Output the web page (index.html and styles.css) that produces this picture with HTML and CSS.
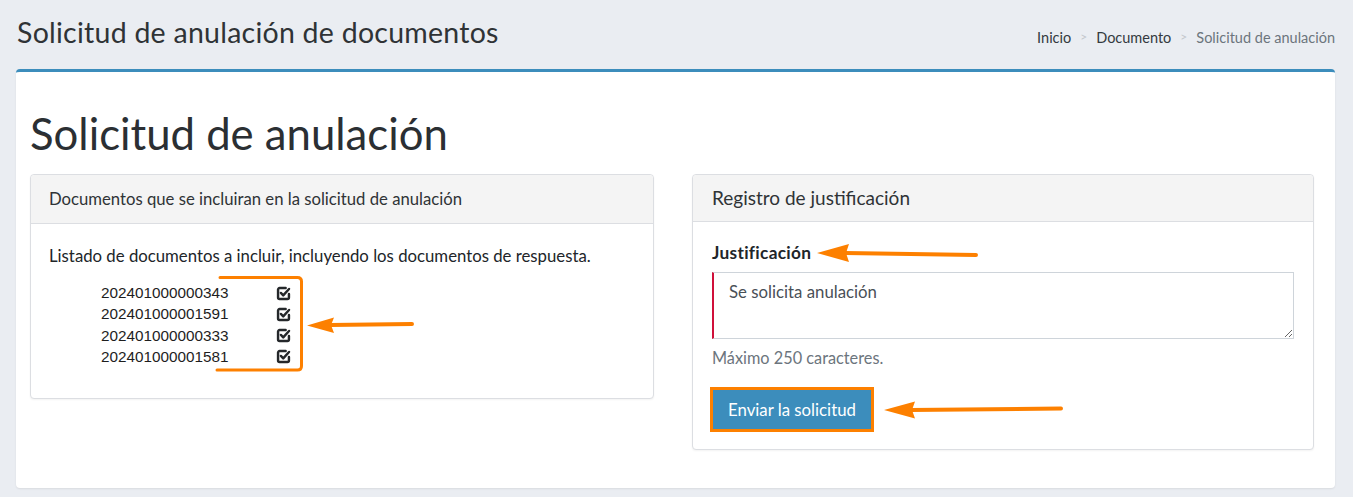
FILE: index.html
```html
<!DOCTYPE html>
<html lang="es">
<head>
<meta charset="utf-8">
<title>Solicitud de anulación de documentos</title>
<link rel="stylesheet" href="styles.css">
</head>
<body>
<div class="page">
  <header class="content-header">
    <h1 class="page-title">Solicitud de anulación de documentos</h1>
    <ol class="breadcrumb">
      <li class="crumb">Inicio</li>
      <li class="sep">&gt;</li>
      <li class="crumb">Documento</li>
      <li class="sep">&gt;</li>
      <li class="crumb active">Solicitud de anulación</li>
    </ol>
  </header>

  <section class="box">
    <h2 class="main-title">Solicitud de anulación</h2>
    <div class="row">
      <div class="card card-docs">
        <div class="card-header">Documentos que se incluiran en la solicitud de anulación</div>
        <div class="card-body">
          <p class="lead-text">Listado de documentos a incluir, incluyendo los documentos de respuesta.</p>
          <ul class="doc-list">
            <li class="doc-row"><span class="doc-num">202401000000343</span><svg class="chk" viewBox="0 0 16 16"><path d="M10.3 2.2H3.8A1.6 1.6 0 0 0 2.2 3.8v8.4a1.6 1.6 0 0 0 1.6 1.6h8.4a1.6 1.6 0 0 0 1.6-1.6V8.4"/><path d="M5.2 7.4l2.5 2.6 6.2-6.8"/></svg></li>
            <li class="doc-row"><span class="doc-num">202401000001591</span><svg class="chk" viewBox="0 0 16 16"><path d="M10.3 2.2H3.8A1.6 1.6 0 0 0 2.2 3.8v8.4a1.6 1.6 0 0 0 1.6 1.6h8.4a1.6 1.6 0 0 0 1.6-1.6V8.4"/><path d="M5.2 7.4l2.5 2.6 6.2-6.8"/></svg></li>
            <li class="doc-row"><span class="doc-num">202401000000333</span><svg class="chk" viewBox="0 0 16 16"><path d="M10.3 2.2H3.8A1.6 1.6 0 0 0 2.2 3.8v8.4a1.6 1.6 0 0 0 1.6 1.6h8.4a1.6 1.6 0 0 0 1.6-1.6V8.4"/><path d="M5.2 7.4l2.5 2.6 6.2-6.8"/></svg></li>
            <li class="doc-row"><span class="doc-num">202401000001581</span><svg class="chk" viewBox="0 0 16 16"><path d="M10.3 2.2H3.8A1.6 1.6 0 0 0 2.2 3.8v8.4a1.6 1.6 0 0 0 1.6 1.6h8.4a1.6 1.6 0 0 0 1.6-1.6V8.4"/><path d="M5.2 7.4l2.5 2.6 6.2-6.8"/></svg></li>
          </ul>
        </div>
      </div>

      <div class="card card-just">
        <div class="card-header card-header-lg">Registro de justificación</div>
        <div class="card-body card-body-form">
          <label class="field-label" for="just">Justificación</label>
          <textarea id="just" class="field-text">Se solicita anulación</textarea>
          <div class="field-help">Máximo 250 caracteres.</div>
          <button class="btn-send" type="button">Enviar la solicitud</button>
        </div>
      </div>
    </div>
  </section>
</div>

<svg class="annot" width="1353" height="497" viewBox="0 0 1353 497">
  <g fill="none" stroke="#fd8000" stroke-linecap="round" stroke-linejoin="round">
    <path stroke-width="3" d="M220 277.5H297.5Q301.5 277.5 301.5 281.5V366Q301.5 370 297.5 370H217"/>
    <path stroke-width="4" d="M330 325L412 324"/>
    <path stroke-width="4" d="M845 253L976 255"/>
    <path stroke-width="4" d="M910 410L1061 408.5"/>
  </g>
  <g fill="#fd8000">
    <path d="M307 325.5L334 317.5L331 325L334 333Z"/>
    <path d="M817 253L849 244L846 253L849 262Z"/>
    <path d="M884 410L915 401.5L912 410L915 418.5Z"/>
  </g>
</svg>
</body>
</html>
```

FILE: styles.css
```css
* { box-sizing: border-box; }

body {
  margin: 0;
  background: #eaedf2;
  font-family: Lato, "Liberation Sans", sans-serif;
  color: #212529;
  position: relative;
}

.page {
  padding: 0 18px 9px 16px;
}

.content-header {
  display: flex;
  justify-content: space-between;
  align-items: baseline;
  height: 69px;
  padding: 16px 0 0 1px;
}

.page-title {
  margin: 0;
  font-size: 28.5px;
  letter-spacing: 0.25px;
  font-weight: 400;
  line-height: 32px;
  color: #2f3336;
}

.breadcrumb {
  display: flex;
  list-style: none;
  margin: 0;
  padding: 0;
  font-size: 14.5px;
  color: #343a40;
}

.breadcrumb .sep {
  color: #c3c7cc;
  padding: 0 9px;
  font-size: 12px;
}

.breadcrumb .active {
  color: #6c757d;
}

.box {
  background: #fff;
  border-top: 3px solid #3c8dbc;
  border-radius: 4px;
  padding: 35px 21px 38px 14px;
  box-shadow: 0 1px 2px rgba(0, 0, 0, 0.08);
}

.main-title {
  margin: 0 0 15px;
  font-size: 43.7px;
  font-weight: 400;
  line-height: 1.2;
  color: #2b2f33;
}

.row {
  display: grid;
  grid-template-columns: 624px 1fr;
  gap: 38px;
  align-items: start;
}

.card {
  background: #fff;
  border: 1px solid #dcdee2;
  border-radius: 4px;
  box-shadow: 0 1px 2px rgba(0, 0, 0, 0.05);
}

.card-header {
  background: #f4f4f4;
  border-bottom: 1px solid #dcdee2;
  border-radius: 4px 4px 0 0;
  padding: 12px 18px;
  font-size: 16.7px;
  line-height: 24px;
  color: #2f3336;
}

.card-header-lg {
  padding: 11px 19px;
  font-size: 19px;
}

.card-body {
  padding: 20px 18px 30px;
}

.lead-text {
  margin: 0 0 14px;
  font-size: 16.75px;
  line-height: 24px;
}

.doc-list {
  list-style: none;
  margin: 0 0 0 52px;
  padding: 0;
}

.doc-row {
  display: grid;
  grid-template-columns: 175px 15px;
  align-items: center;
  height: 21.3px;
}

.doc-num {
  font-family: "Liberation Sans", Arial, sans-serif;
  font-size: 15.3px;
  color: #1e1e1e;
}

.chk {
  width: 15px;
  height: 15px;
  fill: none;
  stroke: #25282b;
  stroke-width: 2.6;
  stroke-linecap: round;
  stroke-linejoin: round;
}

.card-body-form {
  padding: 19px 19px 20px;
}

.field-label {
  display: block;
  font-size: 17.3px;
  letter-spacing: 0.3px;
  font-weight: 700;
  line-height: 24px;
  margin-bottom: 7px;
}

.field-text {
  display: block;
  width: 100%;
  height: 67px;
  border: 1px solid #ced4da;
  border-left: 2px solid #d0103a;
  padding: 7px 15px;
  font-family: Lato, "Liberation Sans", sans-serif;
  font-size: 16.8px;
  line-height: 24px;
  color: #495057;
  background: #fff;
  resize: vertical;
}

.field-help {
  margin-top: 7px;
  font-size: 16.3px;
  line-height: 24px;
  color: #6c757d;
}

.btn-send {
  display: block;
  margin: 20px 0 0 1px;
  height: 39px;
  padding: 0 15px;
  border: none;
  background: #3c8dbc;
  color: #fff;
  font-family: Lato, "Liberation Sans", sans-serif;
  font-size: 16.8px;
  outline: 3px solid #fd8000;
}

.annot {
  position: absolute;
  top: 0;
  left: 0;
  pointer-events: none;
}
```
